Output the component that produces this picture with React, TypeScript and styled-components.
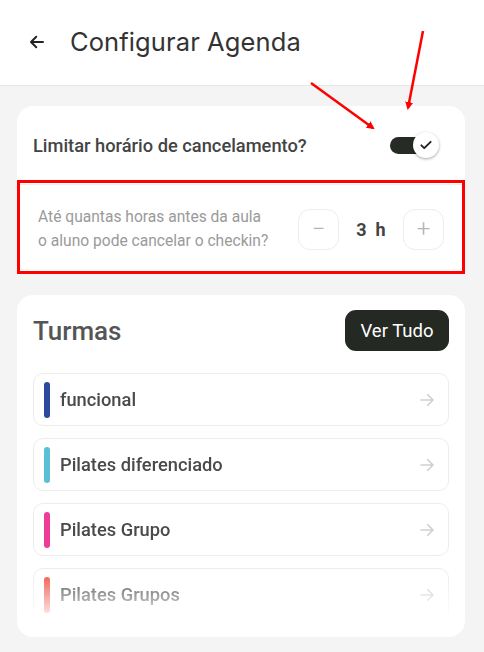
import styled, { createGlobalStyle } from "styled-components";

const GlobalStyle = createGlobalStyle`
  html, body {
    margin: 0;
    padding: 0;
    background: #f4f4f4;
    font-family: Roboto, "Liberation Sans", sans-serif;
  }
  * { box-sizing: border-box; }
`;

type Turma = { name: string; color: string };

const turmas: Turma[] = [
  { name: "funcional", color: "#2c4a9c" },
  { name: "Pilates diferenciado", color: "#5bc0d6" },
  { name: "Pilates Grupo", color: "#ee3d96" },
  { name: "Pilates Grupos", color: "#ef5a4f" },
];

function BackIcon() {
  return (
    <svg width="18" height="18" viewBox="0 0 24 24" fill="none">
      <path d="M20 12H5M11 5l-7 7 7 7" stroke="#222" strokeWidth="2.6" strokeLinecap="round" strokeLinejoin="round" />
    </svg>
  );
}

function ArrowRight() {
  return (
    <svg width="18" height="18" viewBox="0 0 24 24" fill="none">
      <path d="M4 12h15M13 5l7 7-7 7" stroke="#cfcfcf" strokeWidth="2.2" strokeLinecap="round" strokeLinejoin="round" />
    </svg>
  );
}

export default function App() {
  return (
    <Page>
      <GlobalStyle />
      <Header>
        <BackButton>
          <BackIcon />
        </BackButton>
        <Title>Configurar Agenda</Title>
      </Header>

      <Content>
        <Card>
          <ToggleRow>
            <RowLabel>Limitar horário de cancelamento?</RowLabel>
            <Switch>
              <Track />
              <Thumb>
                <svg width="14" height="14" viewBox="0 0 24 24" fill="none">
                  <path d="M4 12.5l5 5L20 6.5" stroke="#222" strokeWidth="3.2" strokeLinecap="round" strokeLinejoin="round" />
                </svg>
              </Thumb>
            </Switch>
          </ToggleRow>
          <StepperRow>
            <Hint>
              Até quantas horas antes da aula
              <br />o aluno pode cancelar o checkin?
            </Hint>
            <Stepper>
              <StepButton>−</StepButton>
              <Value>3&nbsp;&nbsp;h</Value>
              <StepButton>+</StepButton>
            </Stepper>
          </StepperRow>
          <Highlight />
        </Card>

        <ListCard>
          <ListHeader>
            <SectionTitle>Turmas</SectionTitle>
            <DarkButton>Ver Tudo</DarkButton>
          </ListHeader>
          <List>
            {turmas.map((t) => (
              <Item key={t.name}>
                <ColorBar $color={t.color} />
                <ItemName>{t.name}</ItemName>
                <ArrowRight />
              </Item>
            ))}
          </List>
        </ListCard>
      </Content>

      <Annotations width="484" height="200" viewBox="0 0 484 200">
        <defs>
          <marker id="head" markerWidth="8" markerHeight="8" refX="6" refY="4" orient="auto" markerUnits="userSpaceOnUse">
            <path d="M0 0 L8 4 L0 8 z" fill="#f00" />
          </marker>
        </defs>
        <line x1="423" y1="31" x2="408" y2="108" stroke="#f00" strokeWidth="2.5" markerEnd="url(#head)" />
        <line x1="311" y1="83" x2="373" y2="128" stroke="#f00" strokeWidth="2.5" markerEnd="url(#head)" />
      </Annotations>
    </Page>
  );
}

const Page = styled.div`
  position: relative;
  width: 484px;
  height: 652px;
  background: #f4f4f4;
  overflow: hidden;
`;

const Header = styled.header`
  display: flex;
  align-items: center;
  height: 86px;
  padding: 0 0 2px 28px;
  background: #fff;
  border-bottom: 1px solid #e6e6e6;
`;

const BackButton = styled.div`
  display: flex;
  align-items: center;
  width: 42px;
`;

const Title = styled.h1`
  margin: 0;
  font-family: Inter, "Liberation Sans", sans-serif;
  font-weight: 400;
  font-size: 25.5px;
  letter-spacing: 0.1px;
  color: #333;
`;

const Content = styled.main`
  display: flex;
  flex-direction: column;
  gap: 22px;
  padding: 20px 19px 0 17px;
`;

const Card = styled.section`
  position: relative;
  background: #fff;
  border-radius: 16px;
`;

const ToggleRow = styled.div`
  display: flex;
  align-items: center;
  justify-content: space-between;
  height: 79px;
  padding: 0 25px 0 16px;
  border-bottom: 1px solid #eee;
`;

const RowLabel = styled.span`
  font-size: 18.3px;
  font-weight: 500;
  color: #444;
`;

const Switch = styled.div`
  display: flex;
  align-items: center;
  width: 50px;
  height: 26px;
`;

const Track = styled.div`
  width: 36px;
  height: 17px;
  border-radius: 9px;
  background: #262b25;
`;

const Thumb = styled.div`
  display: flex;
  align-items: center;
  justify-content: center;
  width: 26px;
  height: 26px;
  margin-left: -13px;
  border-radius: 50%;
  background: #fff;
  box-shadow: 0 1px 3px rgba(0, 0, 0, 0.35);
`;

const StepperRow = styled.div`
  display: flex;
  align-items: center;
  justify-content: space-between;
  height: 88px;
  padding: 0 21px 0 21px;
`;

const Hint = styled.p`
  margin: 0;
  font-size: 15.6px;
  line-height: 24px;
  color: #9a9a9a;
`;

const Stepper = styled.div`
  display: flex;
  align-items: center;
`;

const StepButton = styled.div`
  display: flex;
  align-items: center;
  justify-content: center;
  width: 41px;
  height: 41px;
  border: 1px solid #ededed;
  border-radius: 12px;
  font-size: 24px;
  font-weight: 300;
  color: #b5b5b5;
`;

const Value = styled.span`
  width: 64px;
  text-align: center;
  font-size: 18px;
  font-weight: 700;
  color: #444;
`;

const Highlight = styled.div`
  position: absolute;
  left: 0;
  right: 0;
  top: 74px;
  bottom: -1px;
  border: 3px solid #f00;
`;

const ListCard = styled.section`
  display: flex;
  flex-direction: column;
  height: 342px;
  padding: 15px 16px 0 16px;
  background: #fff;
  border-radius: 16px;
`;

const ListHeader = styled.div`
  display: flex;
  align-items: center;
  justify-content: space-between;
  margin-bottom: 22px;
`;

const SectionTitle = styled.h2`
  margin: 0;
  font-size: 26px;
  font-weight: 500;
  color: #555;
`;

const DarkButton = styled.button`
  width: 104px;
  height: 41px;
  border: none;
  border-radius: 11px;
  background: #252923;
  color: #fff;
  font-family: Roboto, "Liberation Sans", sans-serif;
  font-size: 18.5px;
`;

const List = styled.div`
  display: flex;
  flex-direction: column;
  gap: 12px;
  height: 248px;
  overflow: hidden;
  -webkit-mask-image: linear-gradient(to bottom, #000 200px, rgba(0, 0, 0, 0.55) 222px, transparent 250px);
  mask-image: linear-gradient(to bottom, #000 200px, rgba(0, 0, 0, 0.55) 222px, transparent 250px);
`;

const Item = styled.div`
  display: flex;
  align-items: center;
  flex-shrink: 0;
  height: 53px;
  padding: 0 12px 0 10px;
  border: 1px solid #ececec;
  border-radius: 10px;
`;

const ColorBar = styled.span<{ $color: string }>`
  width: 6px;
  height: 36px;
  border-radius: 3px;
  background: ${(p) => p.$color};
`;

const ItemName = styled.span`
  flex: 1;
  margin-left: 10px;
  font-size: 18.3px;
  font-weight: 500;
  color: #4a4a4a;
`;

const Annotations = styled.svg`
  position: absolute;
  left: 0;
  top: 0;
  pointer-events: none;
`;
